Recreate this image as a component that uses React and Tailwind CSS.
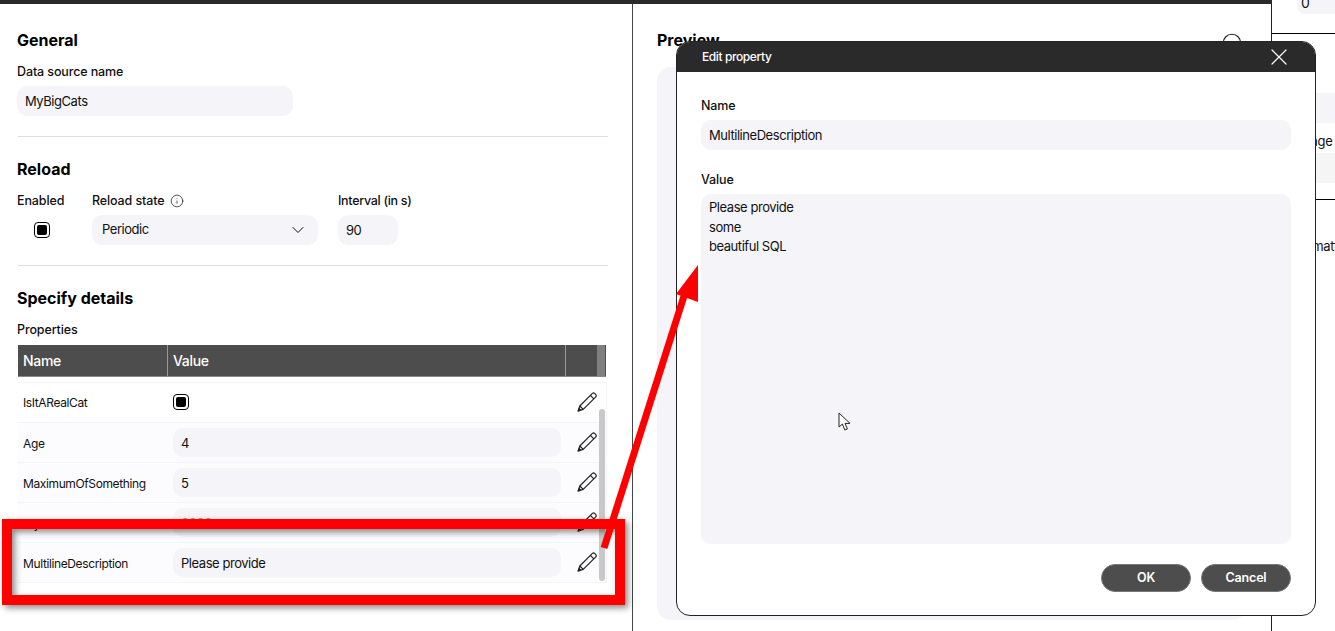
import React from "react";
import { ChevronDown, Info, Search, X } from "lucide-react";

const font = { fontFamily: "Inter, 'Liberation Sans', sans-serif" };

function Box({ className = "", children }) {
  return (
    <div className={"flex items-center rounded-[10px] bg-[#f4f4f9] text-[13px] tracking-[-0.45px] text-[#111] " + className}>
      {children}
    </div>
  );
}

function Check() {
  return (
    <div className="flex h-4 w-4 items-center justify-center rounded-[4px] border-[1.5px] border-black bg-white">
      <div className="h-[10px] w-[10px] rounded-[2px] bg-black" />
    </div>
  );
}

function Pencil() {
  return (
    <svg width="20" height="20" viewBox="0 0 20 20" fill="none" stroke="#222" strokeWidth="1.2" strokeLinejoin="round">
      <path d="M15.4 1.4 C16.1 .8 17 .8 17.6 1.4 L18.8 2.7 C19.4 3.3 19.4 4.2 18.8 4.8 L6.2 17.4 L1.2 19 L2.8 14 Z" />
      <path d="M13.4 3.4 L16.8 6.8" />
      <path d="M2.8 14 L6.2 17.4" />
      <path d="M1.2 19 L2 16.5 L3.7 18.2 Z" fill="#222" />
    </svg>
  );
}

function Row({ name, value, check, muted, alt }) {
  return (
    <div className={"flex h-10 shrink-0 items-center border-b border-[#f3f3f8] " + (alt ? "bg-[#fcfcfe]" : "bg-white")}>
      <div className={"w-[155px] shrink-0 pl-[5px] text-[12px] tracking-[-0.38px] text-[#111] " + (check ? "pt-px" : "pt-[2px]")}>{name}</div>
      {check ? (
        <div className="mb-[2px] w-[388px] shrink-0"><Check /></div>
      ) : (
        <Box className={"h-[29px] w-[388px] shrink-0 pl-2 pt-[2px] " + (muted ? "text-[#999]" : "")}>{value}</Box>
      )}
      <div className="mb-[2px] ml-4 shrink-0"><Pencil /></div>
    </div>
  );
}

function Divider() {
  return <div className="ml-px h-px w-[590px] bg-[#dedede]" />;
}

function Heading({ className = "", children }) {
  return <h2 className={"text-[16px] font-bold leading-5 text-black " + className}>{children}</h2>;
}

function Label({ className = "", children }) {
  return <div className={"text-[12.5px] font-medium leading-4 tracking-[-0.12px] text-[#111] " + className}>{children}</div>;
}

function LeftPanel() {
  return (
    <div className="w-[633px] shrink-0 border-r border-[#444] pl-[17px]">
      <Heading className="mt-[26px]">General</Heading>
      <Label className="mt-[14px]">Data source name</Label>
      <Box className="mt-[6px] h-[30px] w-[276px] pl-2 pt-px">MyBigCats</Box>
      <div className="mt-5"><Divider /></div>

      <Heading className="mt-[22px]">Reload</Heading>
      <div className="mt-[14px] flex">
        <div className="w-[75px] shrink-0">
          <Label>Enabled</Label>
          <div className="ml-[17px] mt-[13px]"><Check /></div>
        </div>
        <div className="w-[226px] shrink-0">
          <Label className="flex items-center gap-[6px]">
            Reload state <Info size={14} strokeWidth={1.2} />
          </Label>
          <Box className="mt-[6px] h-[30px] justify-between pl-[10px] pr-[10px]">
            Periodic
            <ChevronDown size={20} strokeWidth={1.2} />
          </Box>
        </div>
        <div className="ml-5 w-[60px] shrink-0">
          <Label className="whitespace-nowrap"><span className="tracking-[-0.3px]">Interval (in s)</span></Label>
          <Box className="mt-[6px] h-[30px] pl-2 pt-px">90</Box>
        </div>
      </div>
      <div className="mt-5"><Divider /></div>

      <Heading className="mt-[22px]">Specify details</Heading>
      <Label className="mt-[14px]">Properties</Label>

      <div className="relative ml-px mt-[7px] w-[589px]">
        <div className="flex h-8 w-[588px] border-b border-[#888] bg-[#4d4d4d] text-[14px] font-medium tracking-[-0.3px] text-white">
          <div className="flex w-[150px] items-center border-r border-[#999] pl-[5px]">Name</div>
          <div className="flex w-[398px] items-center border-r border-[#999] pl-[5px]">Value</div>
          <div className="flex flex-1 justify-end pr-px"><div className="h-full w-2 bg-[#7f7f7f]" /></div>
        </div>
        <div className="mt-[5px] h-[201px] overflow-hidden border-r border-t border-[#f3f3f8]">
          <Row name="IsItARealCat" check />
          <Row name="Age" value="4" alt />
          <Row name="MaximumOfSomething" value="5" alt />
          <Row name="MySourceCode" value="0000" muted alt />
          <Row name="MultilineDescription" value="Please provide" alt />
        </div>
        <div className="absolute right-[2px] top-[64px] h-[172px] w-[6px] rounded-full bg-[#c8c8c8]" />
      </div>
    </div>
  );
}

function PreviewPanel() {
  return (
    <div className="w-[639px] shrink-0 border-r border-[#222] pl-6 pr-[25px]">
      <div className="mt-[27px] flex items-start justify-between">
        <Heading className="-mt-px">Preview</Heading>
        <Search size={26} strokeWidth={1.1} className="text-[#222]" />
      </div>
      <div className="mt-[10px] h-[553px] w-full rounded-[14px] bg-[#f4f4f9]" />
    </div>
  );
}

function FarPanel() {
  return (
    <div className="min-w-0 flex-1 overflow-hidden text-[13px] tracking-[-0.3px] text-[#111]">
      <div className="-mt-[10px] ml-[25px] flex h-6 w-[120px] items-center rounded-lg bg-[#f4f4f9] pl-1 text-[14px]">0</div>
      <div className="mt-[19px] h-px bg-black" />
      <div className="mt-[59px] flex h-[30px] items-center bg-[#f4f4f9] pl-[10px]">Table</div>
      <div className="mt-[10px] whitespace-nowrap pl-[2px] leading-4">Language</div>
      <div className="mt-[4px] h-[30px] bg-[#f5f5f5]" />
      <div className="mt-[16px] h-px bg-black" />
      <div className="mt-[38px] whitespace-nowrap pl-[21px] leading-4">Formatting</div>
    </div>
  );
}

function Dialog() {
  return (
    <div className="absolute left-[676px] top-[41px] z-10 h-[575px] w-[640px] overflow-hidden rounded-[14px] border-[1.5px] border-[#222] bg-white">
      <div className="flex h-[30px] items-center justify-between bg-[#2a2a2a] pl-[25px] pr-[22px] text-[12px] font-medium tracking-[-0.4px] text-white">
        Edit property
        <X size={28} strokeWidth={1.05} />
      </div>
      <div className="px-6">
        <Label className="mt-[26px]">Name</Label>
        <Box className="mt-[6px] h-[30px] pl-2 pt-px">MultilineDescription</Box>
        <Label className="mt-[22px]">Value</Label>
        <Box className="mt-[6px] h-[350px] items-start whitespace-pre-line pl-2 pt-[4px] leading-[19.5px]">
          {"Please provide\nsome\nbeautiful SQL"}
        </Box>
        <div className="mt-5 flex justify-end gap-[10px]">
          <button className="h-7 w-[90px] rounded-full border border-[#777] bg-[#4d4d4d] pt-px text-[12.5px] font-semibold tracking-[-0.2px] text-white">OK</button>
          <button className="h-7 w-[90px] rounded-full border border-[#777] bg-[#4d4d4d] pt-px text-[12.5px] font-semibold tracking-[-0.2px] text-white">Cancel</button>
        </div>
      </div>
    </div>
  );
}

export default function App() {
  return (
    <div className="relative h-[631px] w-[1335px] overflow-hidden bg-white" style={font}>
      <div className="flex h-full">
        <div className="flex w-[1272px] shrink-0 flex-col">
          <div className="h-1 bg-[#2a2a2a]" />
          <div className="flex flex-1">
            <LeftPanel />
            <PreviewPanel />
          </div>
        </div>
        <FarPanel />
      </div>

      <Dialog />

      {/* annotation: red highlight rectangle */}
      <div className="absolute left-[2px] top-[519px] z-20 h-[86px] w-[623px] border-[10px] border-[#ff0000] drop-shadow-[3px_3px_3px_rgba(0,0,0,0.45)]" />

      {/* annotation: red arrow */}
      <svg className="absolute left-0 top-0 z-30" width="1335" height="631" fill="none">
        <path d="M604 548 L684 296" stroke="#ff0000" strokeWidth="7" />
        <path d="M698 265 L676 294 L698 302 Z" fill="#ff0000" />
      </svg>

      {/* mouse cursor */}
      <svg className="absolute left-[838px] top-[412px] z-30" width="14" height="20" viewBox="0 0 14 20">
        <path d="M1 1 L1 15 L4.4 12 L6.8 18 L9.4 17 L7 11.4 L12 11.4 Z" fill="#fff" stroke="#222" strokeWidth="1" strokeLinejoin="round" />
      </svg>
    </div>
  );
}
